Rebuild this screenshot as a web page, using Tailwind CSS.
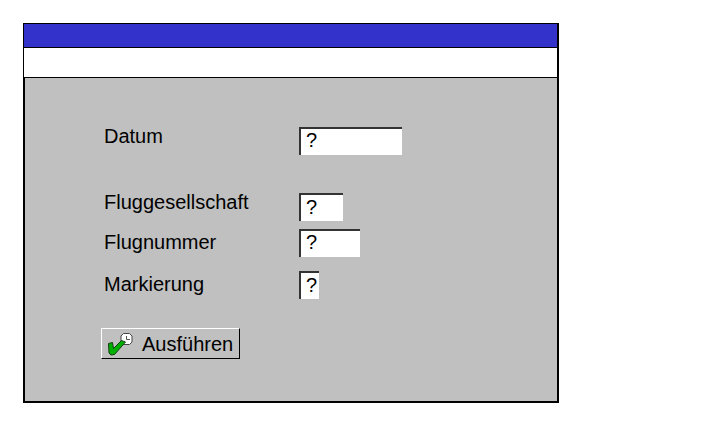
<!DOCTYPE html>
<html lang="de">
<head>
    <meta charset="UTF-8">
    <meta name="viewport" content="width=device-width, initial-scale=1.0">
    <title>Flug</title>
    <script src="https://cdn.jsdelivr.net/npm/@tailwindcss/browser@4"></script>
</head>
<body class="bg-white p-[23px] text-black text-[20px] leading-7 font-['Liberation_Sans',Arial,sans-serif]">

    <main class="w-full max-w-[536px] border-t border-r-2 border-b-2 border-black">
        <!-- Title bar and menu bar -->
        <div class="h-6 border-l border-b border-black bg-[#3333cc]"></div>
        <div class="h-[30px] border-l border-b border-black bg-white"></div>

        <form class="border-l-2 border-black bg-[#c0c0c0] pl-[79px] pt-11 pb-[42px]" onsubmit="return false">
            <div class="flex pb-[33px]">
                <label for="datum" class="w-[195px]">Datum</label>
                <input id="datum" type="text" value="?" class="mt-[5px] h-7 w-[103px] border-t-2 border-l-2 border-[#333333] bg-white pl-[5px] pb-1 outline-none">
            </div>
            <div class="flex pb-[7px]">
                <label for="gesellschaft" class="w-[195px]">Fluggesellschaft</label>
                <input id="gesellschaft" type="text" value="?" class="mt-[5px] h-7 w-11 border-t-2 border-l-2 border-[#333333] bg-white pl-[5px] pb-0.5 outline-none">
            </div>
            <div class="flex pb-[13px]">
                <label for="nummer" class="w-[195px]">Flugnummer</label>
                <input id="nummer" type="text" value="?" class="mt-px h-7 w-[61px] border-t-2 border-l-2 border-[#333333] bg-white pl-[5px] pb-1 outline-none">
            </div>
            <div class="flex pb-[29px]">
                <label for="markierung" class="w-[195px]">Markierung</label>
                <input id="markierung" type="text" value="?" class="mt-px h-7 w-5 border-t-2 border-l-2 border-[#333333] bg-white pl-[5px] pb-0.5 outline-none">
            </div>

            <button type="submit" class="-ml-[3px] flex h-[31px] items-center gap-2 border border-t-white border-l-white border-r-black border-b-black pl-1.5 pr-1.5">
                <svg class="h-6 w-[26px]" viewBox="0 0 26 24" fill="none" aria-hidden="true">
                    <!-- Clock -->
                    <path d="M15.500 1.500h6l2.500 2.500v6l-2.500 2.500h-6L13 10V4z" fill="#fff" stroke="#444"/>
                    <path d="M18.500 4v3.500H22" stroke="#555"/>
                    <!-- Check mark -->
                    <path d="M.5 11.500L4.500 10.500l1 6L13.500 8.500l4 1.500L6.500 22.500l-3.500.5-2-2z" fill="#00b000" stroke="#143c14" stroke-linejoin="round"/>
                </svg>
                <span>Ausführen</span>
            </button>
        </form>
    </main>

</body>
</html>
